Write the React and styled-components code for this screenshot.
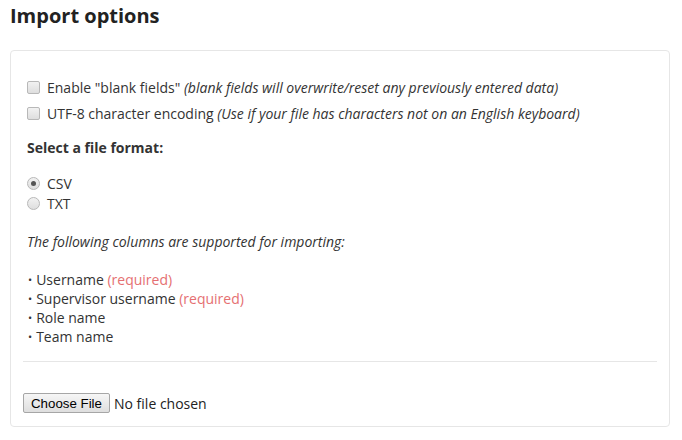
import React from "react";
import styled, { createGlobalStyle } from "styled-components";

const Global = createGlobalStyle`
  html, body { margin: 0; padding: 0; background: #fff; }
  body { font-family: "Open Sans", "Liberation Sans", sans-serif; font-size: 14px; color: #333; }
`;

const Page = styled.div`
  padding: 0 12px 0 10px;
`;

const Title = styled.h2`
  margin: 0 0 20px 0;
  padding-top: 1px;
  font-size: 20px;
  font-weight: 700;
  line-height: 29px;
  color: #222;
`;

const Panel = styled.div`
  border: 1px solid #e6e6e6;
  border-radius: 4px;
  padding: 23px 12px 13px 12px;
`;

const Section = styled.div`
  padding: 0 4px;
`;

const CheckRow = styled.label`
  display: flex;
  align-items: center;
  height: 26px;
  gap: 7px;
`;

const Box = styled.input`
  appearance: none;
  margin: 0;
  width: 13px;
  height: 13px;
  border: 1px solid #b8b8b8;
  border-radius: 2px;
  background: linear-gradient(#f2f2f2, #dedede);
  box-sizing: border-box;
  flex: none;
  position: relative;
  &[type="radio"] { border-radius: 50%; }
  &[type="radio"]:checked::after {
    content: "";
    position: absolute;
    left: 3px; top: 3px;
    width: 5px; height: 5px;
    border-radius: 50%;
    background: #555;
  }
`;

const Note = styled.em`
  font-style: italic;
`;

const Heading = styled.div`
  font-weight: 700;
  margin: 12px 0 15px 0;
  line-height: 20px;
`;

const RadioRow = styled.label`
  display: flex;
  align-items: center;
  height: 20px;
  gap: 7px;
`;

const Info = styled.p`
  margin: 19px 0 19px 0;
  font-style: italic;
  line-height: 19px;
`;

const List = styled.ul`
  list-style: none;
  margin: 0;
  padding: 0 0 0 1px;
`;

const Item = styled.li`
  display: flex;
  align-items: center;
  height: 19px;
  line-height: 19px;
  white-space: pre;
  &::before {
    content: "•";
    margin-right: 4px;
    font-size: 11px;
  }
`;

const Required = styled.span`
  color: #e56f72;
`;

const Divider = styled.hr`
  border: 0;
  border-top: 1px solid #e6e6e6;
  margin: 15px 0 0 0;
`;

const FileRow = styled.div`
  display: flex;
  align-items: center;
  gap: 4px;
  margin-top: 31px;
`;

const FileButton = styled.button`
  font-family: "Liberation Sans", Arial, sans-serif;
  font-size: 13.3px;
  color: #000;
  height: 20px;
  width: 87px;
  padding: 0;
  border: 1px solid #a6a6a6;
  border-radius: 2px;
  background: linear-gradient(#f6f6f6, #dedede);
`;

const FileName = styled.span`
  color: #222;
`;

export default function App() {
  return (
    <Page>
      <Global />
      <Title>Import options</Title>
      <Panel>
        <Section>
          <CheckRow>
            <Box type="checkbox" />
            <span>
              Enable "blank fields" <Note>(blank fields will overwrite/reset any previously entered data)</Note>
            </span>
          </CheckRow>
          <CheckRow>
            <Box type="checkbox" />
            <span>
              UTF-8 character encoding <Note>(Use if your file has characters not on an English keyboard)</Note>
            </span>
          </CheckRow>
          <Heading>Select a file format:</Heading>
          <RadioRow>
            <Box type="radio" name="fmt" defaultChecked />
            <span>CSV</span>
          </RadioRow>
          <RadioRow>
            <Box type="radio" name="fmt" />
            <span>TXT</span>
          </RadioRow>
          <Info>The following columns are supported for importing:</Info>
          <List>
            <Item>Username <Required>(required)</Required></Item>
            <Item>Supervisor username <Required>(required)</Required></Item>
            <Item>Role name</Item>
            <Item>Team name</Item>
          </List>
        </Section>
        <Divider />
        <FileRow>
          <FileButton type="button">Choose File</FileButton>
          <FileName>No file chosen</FileName>
        </FileRow>
      </Panel>
    </Page>
  );
}
